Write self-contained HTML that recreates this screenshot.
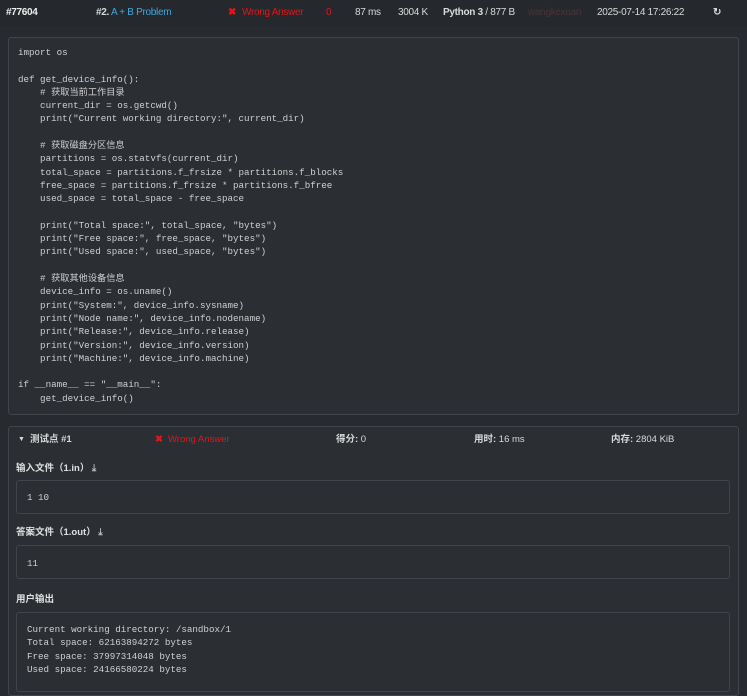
<!DOCTYPE html>
<html><head><meta charset="utf-8"><style>
*{margin:0;padding:0;box-sizing:border-box}
body{width:747px;height:676px;overflow:hidden;background:#272a2e;font-family:"Liberation Sans","Noto Sans CJK SC",sans-serif;color:#d9d9d9;font-size:10px;position:relative}
.top{position:absolute;top:0;left:0;width:747px;height:26px;background:#25282c}
.top span{position:absolute;top:7px;font-size:10px;white-space:nowrap;letter-spacing:-0.3px}
pre{font-family:"Liberation Mono","Noto Sans CJK SC",monospace;font-size:9.2px;line-height:13.3px;color:#d0d0d0}
.box{position:absolute;background:#2b2e33;border:1px solid #41444a;border-radius:3px}
.lab{position:absolute;left:16px;font-weight:bold;font-size:9.5px;color:#e0e0e0}
.red{color:#e0161b}
.blue{color:#3ea8e0}
.row span{position:absolute;top:0;line-height:12px}
</style></head><body>
<div class="top">
<span style="left:6px;font-weight:bold;color:#eee">#77604</span>
<span style="left:96px"><b>#2.</b> <span class="blue" style="position:static">A + B Problem</span></span>
<span class="red" style="left:228px;font-weight:bold">✖</span>
<span class="red" style="left:242px">Wrong Answer</span>
<span class="red" style="left:326px">0</span>
<span style="left:355px">87 ms</span>
<span style="left:398px">3004 K</span>
<span style="left:443px"><b>Python 3</b> / 877 B</span>
<span style="left:528px;color:#4a3436">wangkexuan</span>
<span style="left:597px">2025-07-14 17:26:22</span>
<span style="left:713px;font-weight:bold">↻</span>
</div>
<div class="box" style="left:8px;top:37px;width:731px;height:378px;padding:8px 9px">
<pre>import os

def get_device_info():
    # 获取当前工作目录
    current_dir = os.getcwd()
    print("Current working directory:", current_dir)

    # 获取磁盘分区信息
    partitions = os.statvfs(current_dir)
    total_space = partitions.f_frsize * partitions.f_blocks
    free_space = partitions.f_frsize * partitions.f_bfree
    used_space = total_space - free_space

    print("Total space:", total_space, "bytes")
    print("Free space:", free_space, "bytes")
    print("Used space:", used_space, "bytes")

    # 获取其他设备信息
    device_info = os.uname()
    print("System:", device_info.sysname)
    print("Node name:", device_info.nodename)
    print("Release:", device_info.release)
    print("Version:", device_info.version)
    print("Machine:", device_info.machine)

if __name__ == "__main__":
    get_device_info()</pre>
</div>
<div class="box" style="left:8px;top:426px;width:731px;height:270px"></div>
<div class="row" style="position:absolute;top:434px;left:18px;font-size:9.5px;white-space:nowrap">
<span style="left:0;font-size:7px">▼</span>
<span style="left:12px;font-weight:bold">测试点 #1</span>
<span class="red" style="left:137px;font-weight:bold">✖</span>
<span class="red" style="left:150px">Wrong Answer</span>
<span style="left:318px"><b>得分:</b> 0</span>
<span style="left:456px"><b>用时:</b> 16 ms</span>
<span style="left:593px"><b>内存:</b> 2804 KiB</span>
</div>
<div class="lab" style="top:460px">输入文件（1.in） <span style="color:#bbb">⤓</span></div>
<div class="box" style="left:16px;top:480px;width:714px;height:34px;padding:10px 10px"><pre>1 10</pre></div>
<div class="lab" style="top:524px">答案文件（1.out） <span style="color:#bbb">⤓</span></div>
<div class="box" style="left:16px;top:545px;width:714px;height:34px;padding:11px 10px"><pre>11</pre></div>
<div class="lab" style="top:591px">用户输出</div>
<div class="box" style="left:16px;top:612px;width:714px;height:80px;padding:10px 10px"><pre>Current working directory: /sandbox/1
Total space: 62163894272 bytes
Free space: 37997314048 bytes
Used space: 24166580224 bytes</pre></div>
</body></html>
